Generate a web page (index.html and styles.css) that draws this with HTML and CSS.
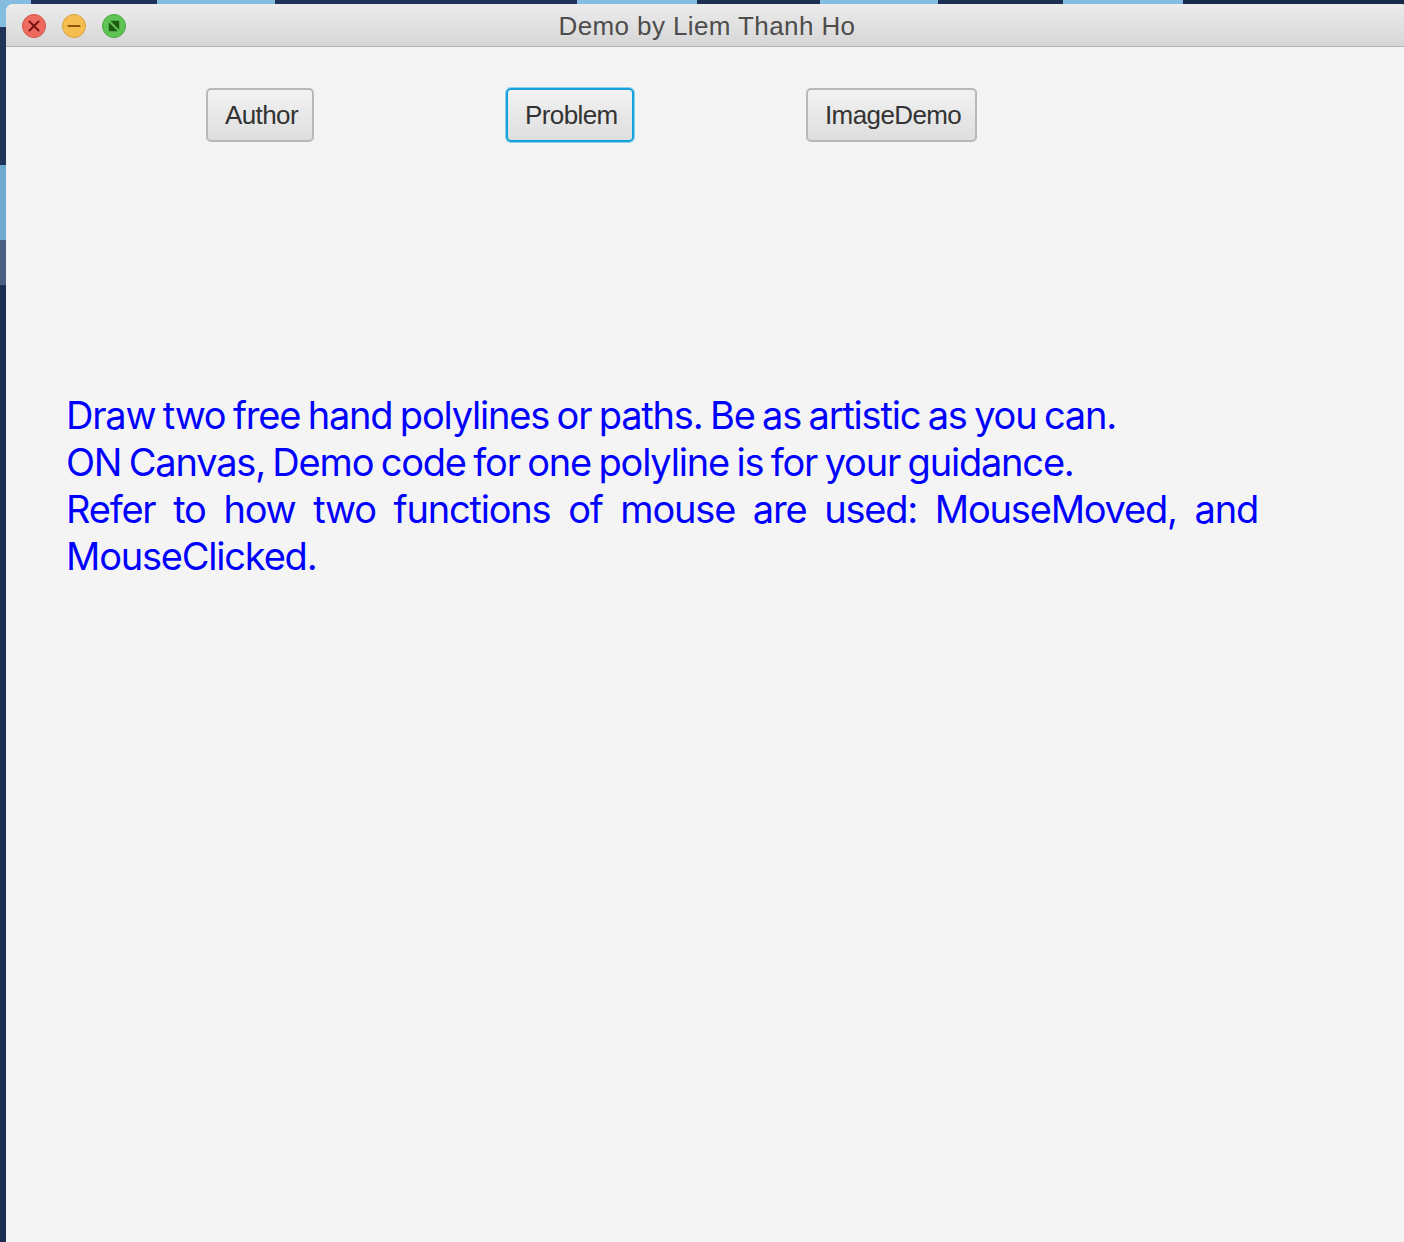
FILE: index.html
```html
<!DOCTYPE html>
<html lang="en">
<head>
<meta charset="utf-8">
<title>Demo by Liem Thanh Ho</title>
<link rel="stylesheet" href="styles.css">
</head>
<body>
<div class="desktop">
  <div class="window">
    <div class="titlebar">
      <div class="lights">
        <span class="light close">
          <svg viewBox="0 0 24 24" width="24" height="24"><path d="M7.5 7.5 L16.5 16.5 M16.5 7.5 L7.5 16.5" stroke="#7a1410" stroke-width="2" stroke-linecap="round"/></svg>
        </span>
        <span class="light min">
          <svg viewBox="0 0 24 24" width="24" height="24"><path d="M6.5 12 L17.5 12" stroke="#8f5510" stroke-width="2.2" stroke-linecap="round"/></svg>
        </span>
        <span class="light max">
          <svg viewBox="0 0 24 24" width="24" height="24"><path d="M8.2 6.8 L17.2 6.8 L17.2 15.8 Z M6.8 8.2 L6.8 17.2 L15.8 17.2 Z" fill="#1e5a14"/></svg>
        </span>
      </div>
      <div class="title">Demo by Liem Thanh Ho</div>
      <div class="spacer"></div>
    </div>
    <div class="content">
      <div class="buttons">
        <div class="slot"><button class="btn">Author</button></div>
        <div class="slot"><button class="btn focused">Problem</button></div>
        <div class="slot"><button class="btn">ImageDemo</button></div>
      </div>
      <div class="message">
        <p class="line">Draw two free hand polylines or paths. Be as artistic as you can.</p>
        <p class="line">ON Canvas, Demo code for one polyline is for your guidance.</p>
        <p class="line">Refer to how two functions of mouse are used: MouseMoved, and MouseClicked.</p>
      </div>
    </div>
  </div>
</div>
</body>
</html>
```

FILE: styles.css
```css
html, body {
  margin: 0;
  padding: 0;
}

body {
  width: 1404px;
  height: 1242px;
  overflow: hidden;
  background: #1c2f52;
}

.desktop {
  width: 1404px;
  height: 1242px;
  overflow: hidden;
  padding: 4px 0 0 6px;
  box-sizing: border-box;
  background:
    linear-gradient(to right,
      #84bde0 0 31px, #1f3358 31px 157px, #84bde0 157px 275px,
      #1f3358 275px 577px, #84bde0 577px 697px, #1c2f52 697px 820px,
      #84bde0 820px 938px, #1c2f52 938px 1063px, #84bde0 1063px 1183px,
      #172a4c 1183px) left top / 100% 8px no-repeat,
    linear-gradient(to bottom,
      #84bde0 0 27px, #203458 27px 165px, #6fa9cf 165px 240px,
      #4b5e80 240px 285px, #1c2f52 285px) left top / 8px 100% no-repeat,
    #1c2f52;
}

.window {
  width: 1402px;
  height: 1240px;
  border-radius: 7px 7px 0 0;
  overflow: hidden;
  background: #f4f4f4;
  display: flex;
  flex-direction: column;
}

.titlebar {
  height: 42px;
  flex: none;
  display: grid;
  grid-template-columns: 1fr auto 1fr;
  align-items: center;
  background: linear-gradient(to bottom, #ececec, #d6d6d6);
  border-bottom: 1px solid #b1b1b1;
}

.lights {
  display: flex;
  gap: 16px;
  padding-left: 16px;
  padding-top: 2px;
}

.light {
  width: 24px;
  height: 24px;
  border-radius: 50%;
  box-sizing: border-box;
  display: block;
}

.light svg {
  display: block;
  margin: -1px;
}

.close {
  background: #ee6a5f;
  border: 1px solid #d4534a;
}

.min {
  background: #f6be50;
  border: 1px solid #d9a13c;
}

.max {
  background: #5fc453;
  border: 1px solid #47a93d;
}

.title {
  font-family: "Liberation Sans", Arial, sans-serif;
  font-size: 26px;
  letter-spacing: 0.4px;
  color: #4d4d4d;
  padding-top: 3px;
}

.content {
  flex: 1;
  padding: 40px 0 0 200px;
}

.buttons {
  display: flex;
}

.slot {
  width: 300px;
}

.btn {
  font-family: "Liberation Sans", Arial, sans-serif;
  font-size: 26px;
  color: #333333;
  height: 54px;
  padding: 0 14px 0 17px;
  margin-top: 1px;
  border: 2px solid #b9b9b9;
  border-radius: 5px;
  background: linear-gradient(to bottom, #f2f2f2, #dedede);
  letter-spacing: -0.6px;
}

.btn.focused {
  border-color: #15a2dc;
  box-shadow: 0 0 0 1px rgba(21, 162, 220, 0.45);
}

.message {
  margin: 250px 0 0 -140px;
  width: 1192px;
  font-family: "Inter", "Liberation Sans", sans-serif;
  font-size: 38px;
  line-height: 47px;
  letter-spacing: -1.2px;
  word-spacing: -2px;
  color: #0000ff;
  text-align: justify;
}

.line {
  margin: 0;
}
```
